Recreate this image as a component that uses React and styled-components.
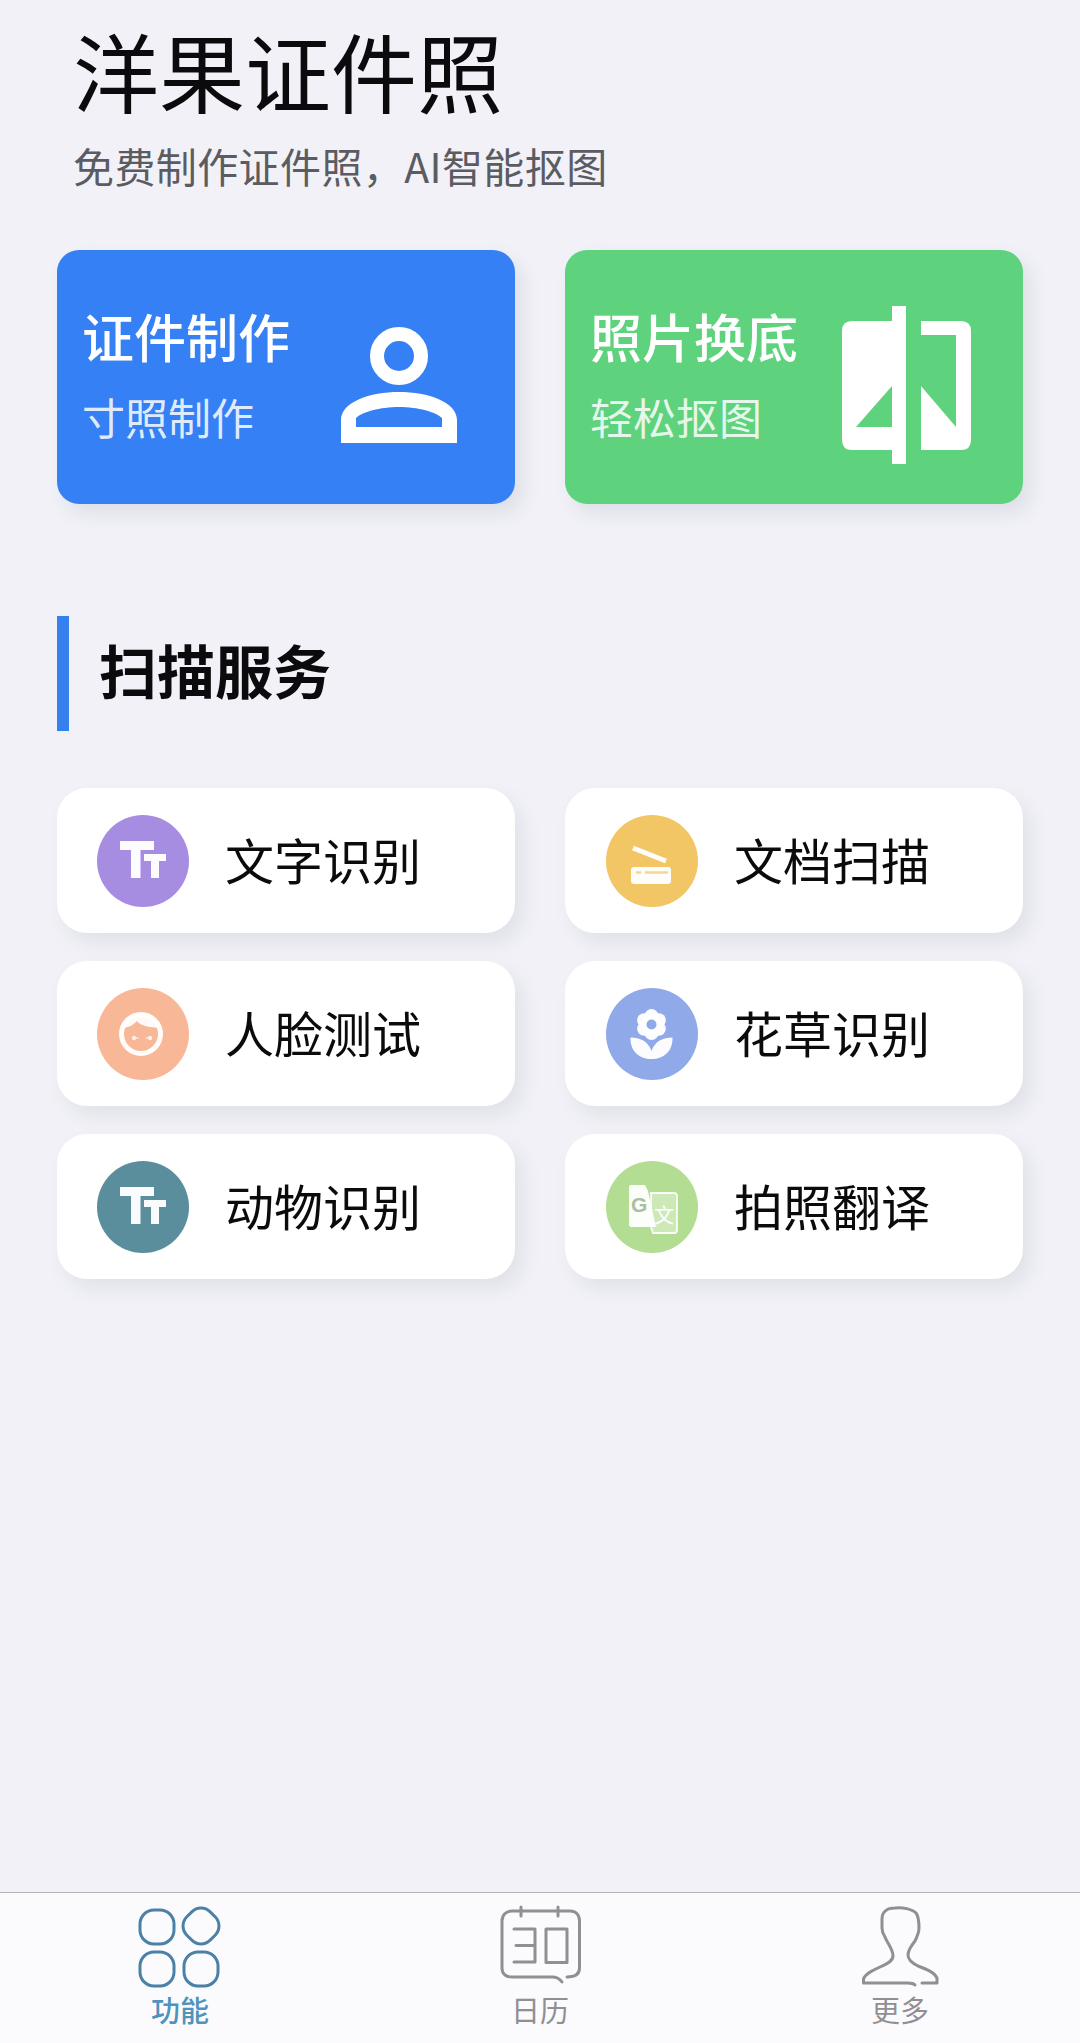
import React from "react";
import styled, { createGlobalStyle } from "styled-components";

const Global = createGlobalStyle`
  html, body { margin: 0; padding: 0; background: #f1f1f7; }
  body { font-family: "Noto Sans CJK SC", "Noto Sans", sans-serif; }
  * { box-sizing: border-box; }
`;

const Page = styled.div`
  width: 1080px;
  height: 2043px;
  display: flex;
  flex-direction: column;
  background: #f1f1f7;
  overflow: hidden;
`;
const Header = styled.header`
  padding: 20px 0 0 73px;
`;
const Title = styled.h1`
  margin: 0;
  font-size: 86px;
  line-height: 100px;
  font-weight: 400;
  color: #0b0b0d;
`;
const Subtitle = styled.p`
  margin: 20px 0 0;
  font-size: 41px;
  line-height: 50px;
  letter-spacing: 0.4px;
  font-weight: 400;
  color: #5b5c62;
`;
const Grid = styled.div`
  display: grid;
  grid-template-columns: 458px 458px;
  column-gap: 50px;
  padding: 0 57px;
`;
const HeroGrid = styled(Grid)`
  margin-top: 60px;
`;
const Hero = styled.div`
  height: 254px;
  border-radius: 22px;
  background: ${(p) => p.$bg};
  box-shadow: 8px 10px 18px rgba(120, 120, 150, 0.14);
  display: flex;
  align-items: center;
  justify-content: space-between;
  padding: 0 ${(p) => p.$right}px 0 25px;
  color: #fff;
`;
const HeroText = styled.div`
  display: flex;
  flex-direction: column;
  gap: 25px;
  margin-bottom: 8px;
`;
const HeroTitle = styled.div`
  font-size: 52px;
  line-height: 60px;
  font-weight: 500;
`;
const HeroSub = styled.div`
  font-size: 43px;
  line-height: 50px;
  font-weight: 400;
  color: rgba(255, 255, 255, 0.86);
`;
const HeroIcon = styled.svg`
  width: 180px;
  height: 180px;
  flex: none;
  margin-top: 6px;
`;
const Section = styled.div`
  margin: 112px 0 0 57px;
  height: 115px;
  display: flex;
  align-items: center;
  border-left: 12px solid #3580ee;
  padding: 0 0 10px 30px;
`;
const SectionTitle = styled.h2`
  margin: 0;
  font-size: 58px;
  line-height: 70px;
  font-weight: 700;
  color: #0b0b0d;
`;
const ListGrid = styled(Grid)`
  margin-top: 57px;
  row-gap: 28px;
`;
const Row = styled.div`
  height: 145px;
  border-radius: 30px;
  background: #fff;
  box-shadow: 8px 10px 18px rgba(120, 120, 150, 0.13);
  display: flex;
  align-items: center;
  gap: 36px;
  padding-left: ${(p) => p.$inset}px;
`;
const Bubble = styled.div`
  width: 92px;
  height: 92px;
  flex: none;
  border-radius: 50%;
  background: ${(p) => p.$bg};
  display: flex;
`;
const BubbleIcon = styled.svg`
  width: 92px;
  height: 92px;
`;
const RowLabel = styled.span`
  font-size: 49px;
  line-height: 60px;
  font-weight: 400;
  color: #0b0b0d;
  margin-bottom: 3px;
`;
const Nav = styled.nav`
  margin-top: auto;
  height: 151px;
  border-top: 1.5px solid #b2b2b7;
  background: #fbfbfe;
  display: grid;
  grid-template-columns: repeat(3, 360px);
`;
const Tab = styled.div`
  display: flex;
  flex-direction: column;
  align-items: center;
  padding-top: 2px;
`;
const TabIcon = styled.svg`
  width: 120px;
  height: 100px;
  fill: none;
  stroke: ${(p) => p.$color};
  stroke-width: 3;
  stroke-linecap: round;
  stroke-linejoin: round;
`;
const TabLabel = styled.span`
  font-size: 29px;
  line-height: 34px;
  margin-top: -3px;
  font-weight: ${(p) => (p.$active ? 500 : 400)};
  color: ${(p) => p.$color};
`;

const W = "#fff";
const box = "8 7 92 92";

const TtIcon = () => (
  <BubbleIcon viewBox="0 0 92 92" fill={W} fillOpacity="0.97">
    <path d="M23 26 H57 V35 H43.5 V63 H34 V35 H23 Z" />
    <path d="M47 39 H69 V46 H62 V63 H54 V46 H47 Z" />
  </BubbleIcon>
);
const FaceIcon = () => (
  <BubbleIcon viewBox={box}>
    <path d="M33 47 C38 47 43 45 48 40 C50 43 55 46 71 47 C69 38 61 33 52 33 C43 33 35 38 33 47 Z" fill={W} fillOpacity="0.92" />
    <circle cx="52" cy="53" r="19.5" fill="none" stroke={W} strokeOpacity="0.95" strokeWidth="5" />
    <circle cx="45" cy="57" r="2.2" fill={W} fillOpacity="0.75" />
    <circle cx="61" cy="57" r="2.2" fill={W} fillOpacity="0.75" />
    <path d="M47 57 H49.5 M56.5 57 H59" stroke={W} strokeOpacity="0.6" strokeWidth="1.3" />
  </BubbleIcon>
);
const ScannerIcon = ({ c }) => (
  <BubbleIcon viewBox={box}>
    <path d="M35 40 L68 53" stroke={W} strokeOpacity="0.96" strokeWidth="5" />
    <rect x="33" y="59" width="40" height="17" rx="3" fill={W} fillOpacity="0.96" />
    <path d="M38 64.5 H43 M47 64.5 H70" stroke={c} strokeOpacity="0.7" strokeWidth="2.6" />
  </BubbleIcon>
);
const FlowerIcon = ({ c }) => (
  <BubbleIcon viewBox={box}>
    <g fill={W} fillOpacity="0.97">
      {[0, 60, 120, 180, 240, 300].map((a) => (
        <circle
          key={a}
          cx={53.5 + 8.5 * Math.cos(((a + 90) * Math.PI) / 180)}
          cy={43.5 + 8.5 * Math.sin(((a + 90) * Math.PI) / 180)}
          r="7"
        />
      ))}
      <circle cx="53.5" cy="43.5" r="10" />
      <path d="M32.5 56.5 C42 56.5 50 60 53.5 70 C57 60 65 56.5 74.5 56.5 C75 70 66 78 53.5 78 C41 78 32 70 32.5 56.5 Z" />
    </g>
    <circle cx="53.5" cy="43.5" r="5" fill={c} />
  </BubbleIcon>
);
const TranslateIcon = () => (
  <BubbleIcon viewBox={box}>
    <path d="M53 39 H76 Q79 39 79 42 V76 Q79 79 76 79 H55 L53 73 Z" fill={W} fillOpacity="0.35" stroke={W} strokeOpacity="0.9" strokeWidth="1.8" />
    <path d="M31 33 Q31 31 33 31 H47 L50 37 L58 73 H33 Q31 73 31 71 Z" fill={W} fillOpacity="0.95" />
    <text x="33" y="58" fontFamily="'Liberation Sans', sans-serif" fontSize="21" fontWeight="700" fill="#a9bea2">G</text>
    <text x="56" y="69" fontFamily="'Noto Sans CJK SC', sans-serif" fontSize="20" fill={W}>文</text>
  </BubbleIcon>
);

const items = [
  ["文字识别", "#a68de2", TtIcon, 40],
  ["文档扫描", "#f2c565", ScannerIcon, 41],
  ["人脸测试", "#f8b898", FaceIcon, 40],
  ["花草识别", "#90a9e8", FlowerIcon, 41],
  ["动物识别", "#5a8e9c", TtIcon, 40],
  ["拍照翻译", "#b2dd92", TranslateIcon, 41],
];

const BLUE = "#4c81a6";
const LABEL_BLUE = "#4f93bd";
const GRAY = "#8f8f94";

export default function App() {
  return (
    <Page>
      <Global />
      <Header>
        <Title>洋果证件照</Title>
        <Subtitle>免费制作证件照，AI智能抠图</Subtitle>
      </Header>
      <HeroGrid>
        <Hero $bg="#3580f4" $right={15}>
          <HeroText>
            <HeroTitle>证件制作</HeroTitle>
            <HeroSub>寸照制作</HeroSub>
          </HeroText>
          <HeroIcon viewBox="0 0 180 180">
            <circle cx="79" cy="66" r="22" fill="none" stroke="#fff" strokeWidth="14" />
            <path
              fill="#fff"
              fillRule="evenodd"
              d="M21 153 V130 C21 112 50 102 79 102 C108 102 137 112 137 130 V153 Z M36 137 H122 V128 C116 122 98 117 79 117 C60 117 42 122 36 128 Z"
            />
          </HeroIcon>
        </Hero>
        <Hero $bg="#5ed27d" $right={24}>
          <HeroText>
            <HeroTitle>照片换底</HeroTitle>
            <HeroSub>轻松抠图</HeroSub>
          </HeroText>
          <HeroIcon viewBox="0 0 180 180">
            <path
              fill="#fff"
              fillRule="evenodd"
              d="M73 16 H87 V174 H73 V160 H33 Q23 160 23 150 V41 Q23 31 33 31 H73 Z M73 96 L37 137 H73 Z"
            />
            <path fill="#fff" d="M102 31 H142 Q152 31 152 41 V150 Q152 160 142 160 H102 V96 L137 137 V45 H102 Z" />
          </HeroIcon>
        </Hero>
      </HeroGrid>
      <Section>
        <SectionTitle>扫描服务</SectionTitle>
      </Section>
      <ListGrid>
        {items.map(([label, color, Icon, inset]) => (
          <Row key={label} $inset={inset}>
            <Bubble $bg={color}>
              <Icon c={color} />
            </Bubble>
            <RowLabel>{label}</RowLabel>
          </Row>
        ))}
      </ListGrid>
      <Nav>
        <Tab>
          <TabIcon viewBox="0 0 120 100" $color={BLUE}>
            <rect x="20" y="15" width="34" height="34" rx="14" />
            <rect x="64.5" y="14.5" width="33" height="33" rx="13" transform="rotate(45 81 31)" />
            <rect x="20" y="57" width="34" height="34" rx="14" />
            <rect x="64" y="57" width="34" height="34" rx="14" />
          </TabIcon>
          <TabLabel $color={LABEL_BLUE} $active>功能</TabLabel>
        </Tab>
        <Tab>
          <TabIcon viewBox="0 0 120 100" $color={GRAY}>
            <path d="M87 82 C95 82 99.5 79 99.5 73 V26 C99.5 20 96 16 90 16 H32 C26 16 22 20 22 26 V73 C22 79 26 82 32 82 H72 C76 82 80 84 82 87" />
            <path d="M41 12 V21 M78 12 V21" />
            <path d="M34 34 H55 V67 H34 M36 50.5 H55" />
            <rect x="66" y="34" width="21" height="33.5" />
          </TabIcon>
          <TabLabel $color={GRAY}>日历</TabLabel>
        </Tab>
        <Tab>
          <TabIcon viewBox="0 0 120 100" $color={GRAY}>
            <path d="M75 90 C73 88 71 88 68 88 H23.5 V84 C25 79 31 76 40 72 C47 69 53 66 53 61 C53 54 47 48 45 42 C43 39 42 36 42 33 V24 C42 17 47 13 55 13 C62 12 72 14 76 18 C79 22 79 28 79 33 C79 38 77 42 75 46 C71 51 68 55 68 60 C68 65 72 68 78 71 C86 74 94 77 97 83 V88 H82" />
          </TabIcon>
          <TabLabel $color={GRAY}>更多</TabLabel>
        </Tab>
      </Nav>
    </Page>
  );
}
